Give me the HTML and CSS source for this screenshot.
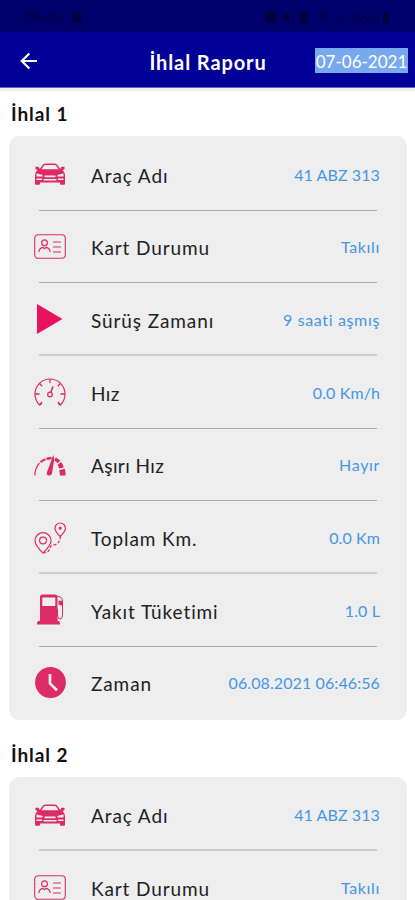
FILE: index.html
```html
<!DOCTYPE html>
<html lang="tr">
<head>
    <meta charset="UTF-8">
    <meta name="viewport" content="width=device-width, initial-scale=1.0">
    <title>İhlal Raporu</title>
    <link rel="stylesheet" href="styles.css">
</head>
<body>
    <!-- icons -->
    <svg class="none">
        <symbol id="car" viewBox="0 0 32 22">
            <path d="M6 7 9 2.600Q9.800 1.200 11.300 1.200h9.400q1.500 0 2.300 1.400L26 7" fill="none" stroke="currentColor" stroke-width="1.500"/>
            <path d="M1.500 3.800h3L6 6.300h20l1.500-2.500h3v2.400l-2 .8Q31 9 31 12v9q0 .8-1 .8h-3q-1 0-1-.8v-1.500H6V21q0 .8-1 .8H2q-1 0-1-.8v-9Q1 9 3.500 7l-2-.8z"/>
            <path d="M2.500 10.500l5.500 1.200q1 .5.500 1.800h-6zM29.500 10.500 24 11.700q-1 .5-.5 1.800h6zM10.500 12.500h11v1.700h-11zM2.500 15.500h5.500v1.600H2.500zM24 15.500h5.500v1.600H24zM9.500 16h13v1.600h-13z" fill="#eee"/>
        </symbol>
        <symbol id="card" viewBox="0 0 32 25">
            <g fill="none" stroke="currentColor" stroke-linecap="round">
                <rect x=".7" y=".7" width="30.600" height="23.600" rx="3.500" stroke-width="1.100"/>
                <circle cx="10.500" cy="8.800" r="2.900" stroke-width="1.200"/>
                <path d="M5 17.500q.3-3.500 4-4.200l1.500 1.400 1.500-1.400q3.700.7 4 4.200" stroke-width="1.200"/>
                <path d="M19.500 8h7M19.500 13h7M19.500 18h7" stroke-width="1.200"/>
            </g>
        </symbol>
        <symbol id="play" viewBox="0 0 26 30">
            <path d="M0 0 25.500 15 0 30z"/>
        </symbol>
        <symbol id="speed" viewBox="0 0 32 28">
            <g fill="none" stroke="currentColor">
                <path d="M8 25.500 5.500 27Q1 22.500 1 16a15 15 0 0 1 30 0q0 6.500-4.500 11L24 25.500" stroke-width="1.200"/>
                <path d="M16 1v4M5.500 5.500l2.700 2.700M26.500 5.500l-2.700 2.700M1 16h4.500M31 16h-4.500M5.500 27l2.500-3M26.500 27 24 24" stroke-width="1.300"/>
                <circle cx="16" cy="16.500" r="2.300" stroke-width="1.300"/>
                <path d="M16.800 14.300 19 8.500" stroke-width="1.600"/>
            </g>
        </symbol>
        <symbol id="over" viewBox="0 0 32 21">
            <g fill="none" stroke="currentColor">
                <path d="M.8 20.500Q1 13 5.500 8" stroke-width="1.200"/>
                <path d="M6.500 7.300Q9 5 11.500 4.300" stroke-width="2.200"/>
                <path d="M12.500 3.800 17.500 3" stroke-width="2.600"/>
                <path d="M21 4.200q2.500 1 4 2.800" stroke-width="3.600"/>
                <path d="M25.300 8.500q1.700 2 2.200 4.500" stroke-width="4.600"/>
                <path d="M28 14.500q.8 3 .8 6" stroke-width="5.800"/>
            </g>
            <path d="M19.300 0 20.300 4 18 18.500q-.7 2.500-3.500 2-2.500-1-1.500-3.500z"/>
        </symbol>
        <symbol id="route" viewBox="0 0 32 32">
            <g fill="none" stroke="currentColor" stroke-width="1.200">
                <path d="M9 31Q1 23.500 1 18.500a8 7.800 0 0 1 16 0Q17 23.500 9 31z"/>
                <circle cx="9" cy="18.500" r="3.400"/>
                <path d="M26.200 14.500Q21 9.500 21 6.200a5.200 5.200 0 0 1 10.400 0q0 3.300-5.200 8.300z"/>
                <circle cx="26.200" cy="6.200" r="1"/>
                <path d="M9 31q5.500 0 6.500-4t5-4.200q5-.8 6-8.300" stroke-dasharray="3 1.700"/>
            </g>
        </symbol>
        <symbol id="fuel" viewBox="0 0 27 31">
            <path fill-rule="evenodd" d="M3 27V3q0-2.500 2.500-2.500H18q2.500 0 2.500 2.500v24h1q1.500 0 1.500 3.500H0Q0 27 1.500 27zM5.300 3.500V12h13V3.500z"/>
            <path d="M20.500 2.200q5 .3 5 5.300v13.500q0 4-2.500 4t-2.500-4V15" fill="none" stroke="currentColor" stroke-width="1"/>
            <path d="M21.500 6.500 25.500 7v5l-4-1.500z"/>
        </symbol>
        <symbol id="clock" viewBox="0 0 31 31">
            <circle cx="15.500" cy="15.500" r="15.400"/>
            <path d="M15 7v9.500l7 6.700" fill="none" stroke="#eee" stroke-width="2.700"/>
        </symbol>
    </svg>

    <div class="status">
        <span class="time">09:40</span>
        <svg class="chat" width="11" height="11" viewBox="0 0 11 11"><rect x=".5" y=".5" width="10" height="10" rx="2"/><path d="M2.500 5.500h4" stroke="#00006c"/></svg>
        <svg class="tray" width="78" height="14" viewBox="0 0 78 14">
            <rect x="0" y="2" width="11" height="11" rx="3"/>
            <path d="M17 5h3l4-3v10l-4-3h-3zM27 3h1.500v9H27zM35 4l2-3h4l2 3v9h-8z"/>
            <path d="M52 5q5-4 10 0M54 8q3-2.500 6 0M62 8l3 3M76 12V9M79 12V6M73 12v-2" fill="none" stroke="currentColor" stroke-width="1.300"/>
        </svg>
        <span class="percent">16%</span>
        <svg class="battery" width="6" height="11" viewBox="0 0 6 11"><path d="M2 0h2v1h2v10H0V1h2z"/></svg>
    </div>

    <div class="header">
        <svg class="back" width="18" height="18" viewBox="0 0 18 18"><path d="M9.300 1.500 1.800 9l7.500 7.500M2 9h15"/></svg>
        <h1>İhlal Raporu</h1>
        <span class="date">07-06-2021</span>
    </div>

    <div class="main">
        <h2>İhlal 1</h2>
        <ul class="report">
            <li><svg class="icon car"><use href="#car"/></svg><span class="label">Araç Adı</span><span class="value">41 ABZ 313</span></li>
            <li><svg class="icon card"><use href="#card"/></svg><span class="label">Kart Durumu</span><span class="value wide">Takılı</span></li>
            <li class="soft"><svg class="icon play"><use href="#play"/></svg><span class="label">Sürüş Zamanı</span><span class="value wide">9 saati aşmış</span></li>
            <li><svg class="icon speed"><use href="#speed"/></svg><span class="label narrow">Hız</span><span class="value">0.0 Km/h</span></li>
            <li><svg class="icon over"><use href="#over"/></svg><span class="label narrow">Aşırı Hız</span><span class="value wide">Hayır</span></li>
            <li class="soft"><svg class="icon route"><use href="#route"/></svg><span class="label">Toplam Km.</span><span class="value">0.0 Km</span></li>
            <li><svg class="icon fuel"><use href="#fuel"/></svg><span class="label">Yakıt Tüketimi</span><span class="value">1.0 L</span></li>
            <li><svg class="icon clock"><use href="#clock"/></svg><span class="label">Zaman</span><span class="value">06.08.2021 06:46:56</span></li>
        </ul>
        <h2>İhlal 2</h2>
        <ul class="report">
            <li class="soft"><svg class="icon car"><use href="#car"/></svg><span class="label">Araç Adı</span><span class="value">41 ABZ 313</span></li>
            <li><svg class="icon card"><use href="#card"/></svg><span class="label">Kart Durumu</span><span class="value wide">Takılı</span></li>
        </ul>
    </div>
</body>
</html>
```
FILE: styles.css
```css
* {
    margin: 0;
    padding: 0;
    box-sizing: border-box;
}
body {
    height: 900px;
    overflow: hidden;
    background-color: #fff;
    font-family: Lato, "Open Sans", sans-serif;
    font-variant-ligatures: none;
}
.none {
    display: none;
}
svg {
    flex: none;
    fill: currentColor;
}
.status {
    display: flex;
    align-items: center;
    height: 32px;
    padding: 2px 26px 0;
    background-color: #00006c;
    color: #00003c;
    font-size: 14px;
}
.chat {
    margin-left: 9px;
}
.tray {
    margin-left: auto;
    overflow: visible;
}
.percent {
    margin-left: 10px;
}
.battery {
    margin-left: 3px;
}
.header {
    display: grid;
    grid-template-columns: 94px 1fr 93px;
    align-items: center;
    height: 56px;
    padding: 2px 7px 0 20px;
    background-color: #000099;
    border-bottom: 1px solid #6464b8;
    box-shadow: 0 3px 1px #f1f1f3;
    color: #fff;
}
.back {
    fill: none;
    stroke: #fff;
    stroke-width: 2.200;
}
.header h1 {
    padding: 2px 13px 0 0;
    font-size: 20px;
    text-align: center;
    white-space: nowrap;
    letter-spacing: 0.900px;
}
.date {
    height: 25px;
    background-color: #78a9ee;
    font-size: 17px;
    line-height: 27px;
    text-align: center;
    white-space: nowrap;
}
.main {
    padding: 0 8px 0 9px;
}
.main h2 {
    height: 48px;
    padding-left: 2px;
    color: #111;
    font-size: 19px;
    line-height: 52px;
    letter-spacing: 0.950px;
}
.report + h2 {
    height: 56.400px;
    line-height: 70px;
}
.report {
    padding: 2px 27px 1px 26px;
    background-color: #eee;
    border-radius: 10px;
    list-style: none;
}
.report:last-child {
    height: 124px;
    border-radius: 10px 10px 0 0;
}
.report li {
    display: grid;
    grid-template-columns: 30px 1fr auto;
    align-items: center;
    column-gap: 26px;
    position: relative;
    height: 72.660px;
    padding-top: 2px;
}
/* divider line under each row */
.report li::after {
    content: "";
    position: absolute;
    left: 4px;
    right: 3px;
    bottom: 0;
    height: 1px;
    background-color: #aaa;
}
.report li.soft::after {
    height: 2px;
    background-color: #ccc;
}
.report li:last-child::after {
    display: none;
}
.icon {
    justify-self: center;
    color: #dd2a68;
}
.car {
    width: 32px;
    height: 22px;
    margin-bottom: 2px;
}
.card {
    width: 32px;
    height: 25px;
    margin-bottom: 2px;
}
.play {
    width: 26px;
    height: 30px;
    margin-bottom: 3px;
    color: #e91261;
}
.speed {
    width: 32px;
    height: 28px;
    margin-bottom: 2px;
}
.over {
    width: 32px;
    height: 21px;
    margin-bottom: 1px;
}
.route {
    width: 32px;
    height: 32px;
    margin-bottom: 2px;
}
.fuel {
    width: 27px;
    height: 31px;
    margin-bottom: 3px;
}
.clock {
    width: 31px;
    height: 31px;
    margin-bottom: 2px;
}
.label {
    color: #222;
    font-size: 19px;
    white-space: nowrap;
    letter-spacing: 0.900px;
}
.label.narrow {
    letter-spacing: 0.400px;
}
.value {
    padding-bottom: 2px;
    color: #4496e6;
    font-size: 16px;
    text-align: right;
    white-space: nowrap;
    letter-spacing: 0.100px;
}
.value.wide {
    letter-spacing: 0.650px;
}
```
